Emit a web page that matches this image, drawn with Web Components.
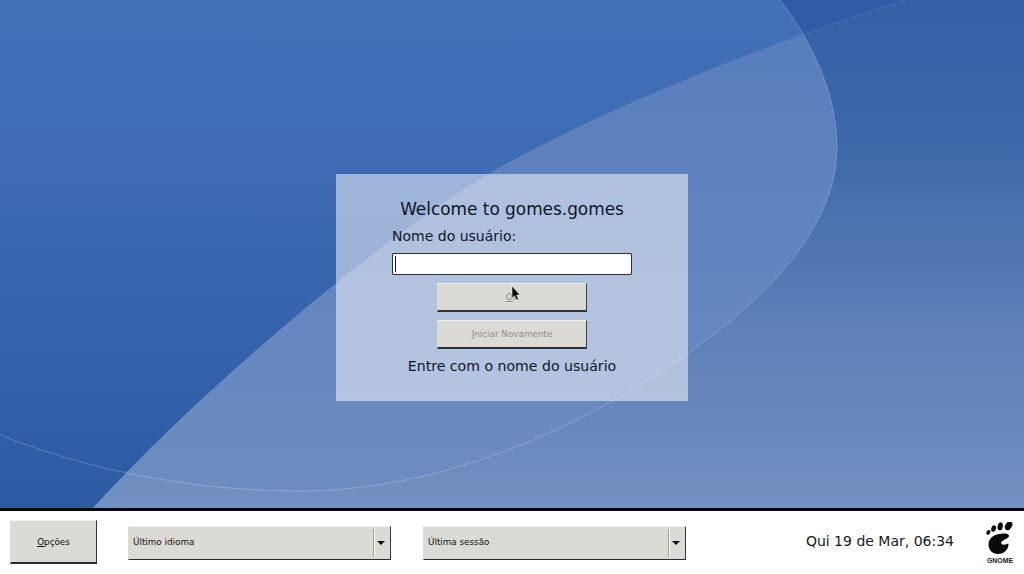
<!DOCTYPE html>
<html lang="pt">
<head>
<meta charset="utf-8">
<title>GDM</title>
<style>
  html, body { margin: 0; height: 100%; overflow: hidden; }
  body { font-family: "DejaVu Sans", sans-serif; }
</style>
</head>
<body>
<gdm-screen>
  <gdm-wallpaper slot="desktop">
    <gdm-login>
      <gdm-entry></gdm-entry>
      <gdm-button slot="actions" wide><u>O</u>K</gdm-button>
      <gdm-button slot="actions" wide><u>I</u>niciar Novamente</gdm-button>
    </gdm-login>
    <gdm-pointer></gdm-pointer>
  </gdm-wallpaper>
  <gdm-bar slot="bar">
    <gdm-button tall><u>O</u>pções</gdm-button>
    <gdm-combo>Último idioma</gdm-combo>
    <gdm-combo>Última sessão</gdm-combo>
    <gdm-clock slot="end">Qui 19 de Mar, 06:34</gdm-clock>
    <gnome-logo slot="end"></gnome-logo>
  </gdm-bar>
</gdm-screen>

<script>
// small helper so every element below just declares its template
const define = (name, html) => {
  customElements.define(
    name,
    class extends HTMLElement {
      connectedCallback() {
        if (this.shadowRoot) return;
        const shadow = this.attachShadow({ mode: "open" });
        shadow.innerHTML = html;
      }
    }
  );
};

define("gdm-screen", `
  <style>
    :host { display: grid; grid-template-rows: 508px 3px 63px; width: 1024px; height: 574px; }
    .rule { background: #0a0a0c; }
  </style>
  <slot name="desktop"></slot>
  <div class="rule"></div>
  <slot name="bar"></slot>`);

const ELLIPSE = "M780 0C815 45 838 100 837 150C835 240 745 320 640 385C530 452 410 491 300 491C190 491 90 470 0 435";
const LINE = "M905 0C770 43 600 110 491 173C400 226 220 370 93 508";

define("gdm-wallpaper", `
  <style>
    :host { display: flex; justify-content: center; position: relative; padding-top: 174px; box-sizing: border-box; height: 508px; overflow: hidden; }
    svg { position: absolute; left: 0; top: 0; }
  </style>
  <svg width="1024" height="508" viewBox="0 0 1024 508">
    <defs>
      <linearGradient id="base" x1="0" y1="0" x2="0" y2="1">
        <stop offset="0" stop-color="#3460a6"/>
        <stop offset=".3" stop-color="#4069ab"/>
        <stop offset=".65" stop-color="#5f80b8"/>
        <stop offset="1" stop-color="#7290c1"/>
      </linearGradient>
      <linearGradient id="lens" x1="0" y1="0" x2="0" y2="1">
        <stop offset="0" stop-color="#4271b8"/>
        <stop offset=".35" stop-color="#3e6bb3"/>
        <stop offset=".75" stop-color="#3362aa"/>
        <stop offset="1" stop-color="#2d5ba3"/>
      </linearGradient>
      <linearGradient id="band" x1="0" y1="0" x2="0" y2="1">
        <stop offset="0" stop-color="#577cbc"/>
        <stop offset="1" stop-color="#6e8dc1"/>
      </linearGradient>
      <clipPath id="aboveLine"><path d="${LINE}H0V0Z"/></clipPath>
      <clipPath id="ellipse"><path d="${ELLIPSE}V0Z"/></clipPath>
    </defs>
    <rect width="1024" height="508" fill="url(#base)"/>
    <rect width="1024" height="508" fill="url(#lens)" clip-path="url(#aboveLine)"/>
    <rect x="770" width="254" height="40" fill="#2f5ca4" clip-path="url(#aboveLine)"/>
    <path d="${ELLIPSE}V0Z" fill="url(#lens)" clip-path="url(#aboveLine)"/>
    <path d="${LINE}H1024V0Z" fill="url(#band)" clip-path="url(#ellipse)"/>
    <path d="${ELLIPSE}" fill="none" stroke="#fff" stroke-opacity=".2"/>
    <path d="${LINE}" fill="none" stroke="#fff" stroke-opacity=".1"/>
  </svg>
  <slot></slot>`);

define("gdm-login", `
  <style>
    :host { display: flex; flex-direction: column; align-items: center; position: relative; box-sizing: border-box; width: 352px; height: 227px; padding-top: 25px; background: rgba(255,255,255,.5); color: #0e1526; }
    h1 { margin: 0; font: 400 16.9px/21px "DejaVu Sans", sans-serif; }
    label { width: 240px; margin-top: 7px; font-size: 14px; line-height: 18px; }
    .entry { margin-top: 8px; display: flex; }
    .actions { display: flex; flex-direction: column; gap: 8px; margin-top: 8px; }
    p { margin: 8px 0 0; font-size: 14.1px; line-height: 18px; }
  </style>
  <h1>Welcome to gomes.gomes</h1>
  <label>Nome do usuário:</label>
  <div class="entry"><slot></slot></div>
  <div class="actions"><slot name="actions"></slot></div>
  <p>Entre com o nome do usuário</p>`);

define("gdm-entry", `
  <style>
    :host { display: flex; align-items: center; box-sizing: border-box; width: 240px; height: 22px; padding-left: 2px; background: #fff; border: 1px solid #2b2f3b; border-radius: 1px; }
    i { width: 1px; height: 16px; background: #1a1a1a; }
  </style>
  <i></i>`);

define("gdm-button", `
  <style>
    :host { display: flex; align-items: center; justify-content: center; box-sizing: border-box; background: #dcdad5; border: 1px solid; border-color: #eeedea #3a3f4a #2c303a #d8dbe2; border-bottom-width: 2px; font-size: 8.8px; color: #111; }
    :host([wide]) { width: 150px; height: 29px; color: #8f8d88; }
    :host([tall]) { width: 87px; height: 44px; margin-top: 9px; border-color: #f4f3f0 #34363c #2a2c32 #dcdad5; }
  </style>
  <slot></slot>`);

define("gdm-combo", `
  <style>
    :host { display: flex; align-items: center; box-sizing: border-box; width: 263px; height: 34px; margin-top: 15px; background: #dcdad5; border: 1px solid; border-color: #f2f1ee #34363c #2a2c32 #dcdad5; font-size: 8.8px; color: #111; }
    .label { flex: 1; padding: 0 0 2px 4px; }
    .sep { width: 1px; height: 28px; background: #9c9a95; border-right: 1px solid #fff; }
    .arrow { display: flex; justify-content: center; width: 15px; padding-right: 3px; box-sizing: border-box; }
    .arrow span { width: 0; height: 0; border: 4px solid transparent; border-top: 4px solid #111; border-bottom: 0; }
  </style>
  <div class="label"><slot></slot></div>
  <div class="sep"></div>
  <div class="arrow"><span></span></div>`);

define("gdm-bar", `
  <style>
    :host { display: flex; justify-content: space-between; background: #fff; padding: 0 9px 0 10px; height: 63px; box-sizing: border-box; align-items: flex-start; }
    .start { display: flex; align-items: flex-start; gap: 31px; }
    .start ::slotted(gdm-combo:last-of-type) { margin-left: 1px; }
    .end { display: flex; align-items: flex-start; gap: 31px; }
  </style>
  <div class="start"><slot></slot></div>
  <div class="end"><slot name="end"></slot></div>`);

define("gdm-clock", `
  <style>
    :host { display: block; margin-top: 21px; font-size: 14px; line-height: 19px; color: #15171c; }
  </style>
  <slot></slot>`);

define("gnome-logo", `
  <style>
    :host { display: flex; flex-direction: column; align-items: center; width: 30px; margin-top: 11px; }
    svg { display: block; }
    span { font: 700 6.9px/7px "Liberation Sans", sans-serif; color: #222; margin-top: 2px; }
  </style>
  <svg width="30" height="33" viewBox="0 0 30 33" fill="#0a0a0a">
    <ellipse cx="3.4" cy="10.4" rx="1.9" ry="2.5" transform="rotate(35 3.4 10.4)"/>
    <ellipse cx="8.6" cy="6.6" rx="2.3" ry="3.3" transform="rotate(20 8.6 6.6)"/>
    <ellipse cx="15.2" cy="4.4" rx="2.6" ry="3.9" transform="rotate(12 15.2 4.4)"/>
    <ellipse cx="23.6" cy="3.8" rx="3.2" ry="4.8" transform="rotate(32 23.6 3.8)"/>
    <path d="M14 12C18 11 23.5 11 24 13.5C24.3 16 20 17 18 18.5C16 20 15.5 21.5 17 22.3C19 23 21.5 22.5 23.5 21.5C24 27 19 32 13 32C7 32 3.5 27.5 3.5 22.5C3.5 17 8 13 14 12Z"/>
  </svg>
  <span>GNOME</span>`);

define("gdm-pointer", `
  <style>
    :host { display: block; position: absolute; left: 511px; top: 286px; width: 10px; height: 16px; }
  </style>
  <svg width="10" height="16" viewBox="0 0 10 16"><path d="M1 0V12L3.6 9.8L5.4 14L7.4 13L5.6 9H9Z" fill="#0a0a0a" stroke="#fff" stroke-width=".5"/></svg>`);
</script>
</body>
</html>
